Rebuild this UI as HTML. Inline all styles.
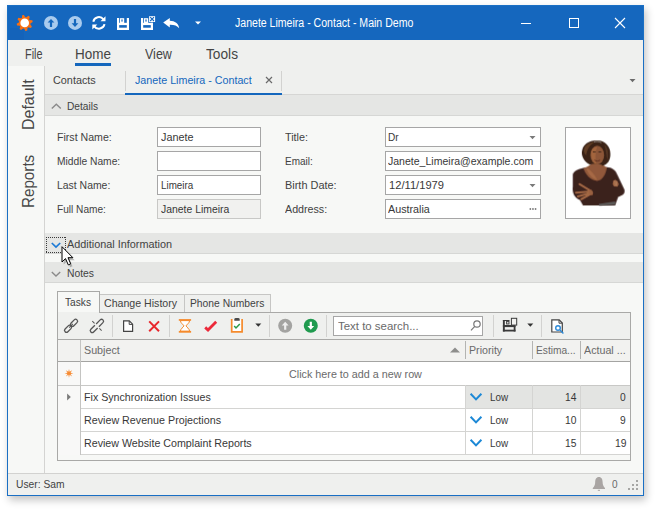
<!DOCTYPE html>
<html><head><meta charset="utf-8">
<style>
*{box-sizing:border-box;margin:0;padding:0}
html,body{width:657px;height:511px;overflow:hidden;background:#fff;font-family:"Liberation Sans",sans-serif;font-size:11px;color:#3b3b3b}
.a{position:absolute}
.x{position:absolute;white-space:nowrap;line-height:1;transform-origin:0 50%}
#win{left:7px;top:5px;width:637px;height:491px;background:#eff0ee;box-shadow:2px 4px 8px 0 rgba(0,0,0,.24)}
#frame{left:7px;top:5px;width:637px;height:491px;border:1px solid #1a6fc4}
#title{left:7px;top:5px;width:637px;height:35px;background:#1567be}
#side{left:8px;top:66px;width:37px;height:407px;background:#f7f8f6;border-right:1px solid #d4d4d2}
.hdr{left:45px;width:598px;height:21px;background:#e5e6e4;border-bottom:1px solid #d6d7d5}
.inp{height:20px;background:#fff;border:1px solid #a6a6a6}
.ro{background:#f1f1ef;border-color:#c8c8c6}
.sep{width:1px;height:22px;top:315px;background:#d2d2d0}
svg{position:absolute;overflow:visible}
</style></head><body>
<div id="win" class="a"></div>
<div id="title" class="a"></div>

<!-- menu underline -->
<div class="a" style="left:75px;top:63px;width:36px;height:3px;background:#1467bd"></div>

<div id="side" class="a"></div>

<!-- doc tabs -->
<div class="a" style="left:125px;top:71px;width:1px;height:20px;background:#d2d2d0"></div>
<div class="a" style="left:281px;top:71px;width:1px;height:20px;background:#d2d2d0"></div>
<div class="a" style="left:45px;top:94px;width:598px;height:1px;background:#d6d6d4"></div>
<div class="a" style="left:125px;top:93px;width:157px;height:2px;background:#1467bd"></div>

<!-- Details -->
<div class="a hdr" style="top:95px"></div>
<div class="a" style="left:45px;top:116px;width:598px;height:117px;background:#f7f8f6"></div>
<div class="a inp" style="left:157px;top:127px;width:104px"></div>
<div class="a inp" style="left:157px;top:151px;width:104px"></div>
<div class="a inp" style="left:157px;top:175px;width:104px"></div>
<div class="a inp ro" style="left:157px;top:199px;width:104px"></div>
<div class="a inp" style="left:385px;top:127px;width:156px"></div>
<div class="a inp" style="left:385px;top:151px;width:156px"></div>
<div class="a inp" style="left:385px;top:175px;width:156px"></div>
<div class="a inp" style="left:385px;top:199px;width:156px"></div>
<div class="a" style="left:565px;top:127px;width:66px;height:92px;background:#fff;border:1px solid #a6a6a6"></div>

<div class="a hdr" style="top:233px"></div>
<div class="a" style="left:45px;top:254px;width:598px;height:8px;background:#f7f8f6"></div>
<div class="a hdr" style="top:262px"></div>
<div class="a" style="left:45px;top:283px;width:598px;height:190px;background:#f7f8f6"></div>

<!-- inner tabs -->
<div class="a" style="left:99px;top:294px;width:86px;height:19px;background:#eff0ee;border:1px solid #c6c6c4;border-bottom:0"></div>
<div class="a" style="left:184px;top:294px;width:87px;height:19px;background:#eff0ee;border:1px solid #c6c6c4;border-bottom:0"></div>
<!-- toolbar -->
<div class="a" style="left:57px;top:312px;width:574px;height:28px;background:#eff0ee;border:1px solid #a9a9a7;border-bottom:0"></div>
<div class="a" style="left:57px;top:291px;width:43px;height:22px;background:#f7f8f6;border:1px solid #a9a9a7;border-bottom:0"></div>
<div class="a" style="left:58px;top:312px;width:41px;height:1px;background:#eff0ee"></div>

<div class="a sep" style="left:112px"></div>
<div class="a sep" style="left:169px"></div>
<div class="a sep" style="left:269px"></div>
<div class="a sep" style="left:326px"></div>
<div class="a sep" style="left:493px"></div>
<div class="a sep" style="left:541px"></div>
<div class="a inp" style="left:333px;top:316px;width:150px"></div>

<!-- grid -->
<div class="a" style="left:57px;top:339px;width:574px;height:122px;background:#f7f8f6;border:1px solid #a9a9a7"></div>
<div class="a" style="left:58px;top:340px;width:572px;height:22px;background:#f2f2f0"></div>
<div class="a" style="left:58px;top:362px;width:23px;height:93px;background:#f8f8f7"></div>
<div class="a" style="left:81px;top:361px;width:549px;height:93px;background:#fff"></div>
<div class="a" style="left:466px;top:386px;width:164px;height:22px;background:#e3e4e2"></div>
<!-- grid lines -->
<div class="a" style="left:58px;top:361px;width:572px;height:1px;background:#a4a4a2"></div>
<div class="a" style="left:58px;top:385px;width:572px;height:1px;background:#c8c8c6"></div>
<div class="a" style="left:81px;top:408px;width:549px;height:1px;background:#d4d4d2"></div>
<div class="a" style="left:81px;top:431px;width:549px;height:1px;background:#d4d4d2"></div>
<div class="a" style="left:81px;top:454px;width:549px;height:1px;background:#d4d4d2"></div>
<div class="a" style="left:80px;top:340px;width:1px;height:115px;background:#c4c4c2"></div>
<div class="a" style="left:465px;top:341px;width:1px;height:18px;background:#b4b4b2"></div>
<div class="a" style="left:532px;top:341px;width:1px;height:18px;background:#b4b4b2"></div>
<div class="a" style="left:580px;top:341px;width:1px;height:18px;background:#b4b4b2"></div>
<div class="a" style="left:465px;top:385px;width:1px;height:70px;background:#d4d4d2"></div>
<div class="a" style="left:532px;top:385px;width:1px;height:70px;background:#d4d4d2"></div>
<div class="a" style="left:580px;top:385px;width:1px;height:70px;background:#d4d4d2"></div>

<!-- status -->
<div class="a" style="left:8px;top:473px;width:635px;height:22px;background:#eff0ee;border-top:1px solid #d2d2d0"></div>

<svg class="a" style="left:0;top:0" width="657" height="511" viewBox="0 0 657 511">
<!-- hover patch -->
<rect x="10" y="28" width="14" height="12" fill="#1560b6" opacity=".45"/>
<!-- sun logo -->
<g transform="translate(24.7,22.9)">
  <g fill="#fb6f10"><circle r="5.8"/><path d="M-1.8,-5.2 L-0.9,-8 L0.9,-8 L1.8,-5.2 Z" transform="rotate(-12)"/><path d="M-1.8,-5.2 L-0.9,-8 L0.9,-8 L1.8,-5.2 Z" transform="rotate(33)"/><path d="M-1.8,-5.2 L-0.9,-8 L0.9,-8 L1.8,-5.2 Z" transform="rotate(78)"/><path d="M-1.8,-5.2 L-0.9,-8 L0.9,-8 L1.8,-5.2 Z" transform="rotate(123)"/><path d="M-1.8,-5.2 L-0.9,-8 L0.9,-8 L1.8,-5.2 Z" transform="rotate(168)"/><path d="M-1.8,-5.2 L-0.9,-8 L0.9,-8 L1.8,-5.2 Z" transform="rotate(213)"/><path d="M-1.8,-5.2 L-0.9,-8 L0.9,-8 L1.8,-5.2 Z" transform="rotate(258)"/><path d="M-1.8,-5.2 L-0.9,-8 L0.9,-8 L1.8,-5.2 Z" transform="rotate(303)"/></g>
  <circle r="4.3" fill="#fff"/>
</g>
<!-- up / down circles -->
<g transform="translate(51,22.9)"><circle r="7" fill="#a9cbee"/><path d="M0,-4 L3.4,-0.3 L1.1,-0.3 L1.1,4 L-1.1,4 L-1.1,-0.3 L-3.4,-0.3 Z" fill="#1467bd"/></g>
<g transform="translate(75,22.9)"><circle r="7" fill="#a9cbee"/><path d="M0,4 L3.4,0.3 L1.1,0.3 L1.1,-4 L-1.1,-4 L-1.1,0.3 L-3.4,0.3 Z" fill="#1467bd"/></g>
<!-- refresh -->
<g transform="translate(98.9,22.9)" fill="none" stroke="#fff" stroke-width="2">
  <path d="M-5.6,-1.2 A5.7,5.7 0 0 1 4.6,-3.4"/>
  <path d="M5.6,1.2 A5.7,5.7 0 0 1 -4.6,3.4"/>
  <path d="M6.6,-6.6 L6.6,-1.6 L1.6,-1.6 Z" fill="#fff" stroke="none"/>
  <path d="M-6.6,6.6 L-6.6,1.6 L-1.6,1.6 Z" fill="#fff" stroke="none"/>
</g>
<!-- save -->
<g transform="translate(117,18)" fill="#fff">
  <rect x="0" y="0" width="2.2" height="12"/><rect x="9.8" y="0" width="2.2" height="12"/>
  <rect x="0" y="4.8" width="12" height="2.3"/><rect x="0" y="9.7" width="12" height="2.3"/>
  <rect x="3" y="0.2" width="4.2" height="4.8"/><rect x="4.4" y="1.4" width="1.2" height="2.2" fill="#1567be"/>
</g>
<!-- save & close -->
<g transform="translate(141,18)" fill="#fff">
  <rect x="0" y="0" width="2.2" height="12"/><rect x="9.8" y="4.8" width="2.2" height="7.2"/>
  <rect x="0" y="4.8" width="12" height="2.3"/><rect x="0" y="9.7" width="12" height="2.3"/>
  <rect x="3" y="0.2" width="4.2" height="4.8"/><rect x="4.4" y="1.4" width="1.2" height="2.2" fill="#1567be"/>
  <rect x="8.1" y="-1.8" width="6" height="5.8"/>
  <path d="M9.2,-0.8 L13,3 M13,-0.8 L9.2,3" stroke="#1567be" stroke-width="1.1" fill="none"/>
</g>
<!-- undo -->
<path d="M163.2,22.6 L169.8,18 L169.8,20.8 C175,20.8 178.6,23.6 179.2,28.3 C177,25.6 174,24.6 169.8,24.7 L169.8,27.4 Z" fill="#fff"/>
<path d="M195,21.4 H201 L198,24.6 Z" fill="#fff"/>
<!-- window controls -->
<rect x="521" y="23" width="10" height="1" fill="#fff"/>
<rect x="569.5" y="18.5" width="9" height="9" fill="none" stroke="#fff" stroke-width="1"/>
<path d="M615,18 L625,28 M625,18 L615,28" stroke="#fff" stroke-width="1.1" fill="none"/>
<!-- tab close, tab dropdown -->
<path d="M266,77 L272,83 M272,77 L266,83" stroke="#6a6a6a" stroke-width="1.2" fill="none"/>
<path d="M629.5,79 H635.5 L632.5,82.2 Z" fill="#6a6a6a"/>
<!-- group chevrons -->
<path d="M51.8,108.6 L56.3,104.2 L60.8,108.6" stroke="#8a8a8a" stroke-width="1.4" fill="none"/>
<path d="M51.8,243 L56,247 L60.2,243" stroke="#1c7ad6" stroke-width="1.7" fill="none"/>
<path d="M51.8,272 L56,276 L60.2,272" stroke="#8a8a8a" stroke-width="1.4" fill="none"/>
<g shape-rendering="crispEdges" stroke="#3a3a3a" stroke-width="1" stroke-dasharray="1 1" fill="none"><path d="M46,237.5 H66 M46,252.5 H66 M46.5,237 V253 M65.5,237 V253"/></g>
<!-- combo arrows -->
<path d="M529.5,136 H535.5 L532.5,139.2 Z" fill="#7a7a7a"/>
<path d="M529.5,184 H535.5 L532.5,187.2 Z" fill="#7a7a7a"/>
<g fill="#6a6a6a"><rect x="529.6" y="208.2" width="1.5" height="1.6"/><rect x="532.2" y="208.2" width="1.5" height="1.6"/><rect x="534.8" y="208.2" width="1.5" height="1.6"/></g>
</svg>

<svg class="a" style="left:0;top:0" width="657" height="511" viewBox="0 0 657 511">
<!-- link -->
<g transform="translate(71.05,325.8) rotate(-45)" fill="none" stroke="#555" stroke-width="1.3">
  <rect x="-8.4" y="-1.95" width="8.3" height="3.9" rx="1.95"/>
  <rect x="0.1" y="-1.95" width="8.3" height="3.9" rx="1.95"/>
  <path d="M-2.6,0 H2.6" stroke-width="1"/>
</g>
<!-- unlink -->
<g transform="translate(96.9,325.95) rotate(-45)" fill="none" stroke="#555" stroke-width="1.3">
  <path d="M-0.9,-1.95 H-6.6 A1.95,1.95 0 0 0 -6.6,1.95 H-0.9"/>
  <path d="M0.9,-1.95 H6.6 A1.95,1.95 0 0 1 6.6,1.95 H0.9"/>
  <path d="M0.1,-6.6 V-3.4 M0.1,6.6 V3.4" stroke-width="1"/>
</g>
<!-- new doc -->
<path d="M123.6,320.9 H129.3 L132.6,324.2 V331.3 H123.6 Z" fill="#fff" stroke="#444" stroke-width="1.2"/>
<path d="M129.2,321 V324.4 H132.6" fill="none" stroke="#444" stroke-width="1"/>
<!-- red X -->
<path d="M149.2,321.4 L159,331.2 M159,321.4 L149.2,331.2" stroke="#e8272c" stroke-width="2" fill="none"/>
<!-- hourglass -->
<path d="M180.4,320.6 H189.6 C189.6,323 186.6,324.6 186,325.9 C186.6,327.2 189.6,328.8 189.6,331.2 H180.4 C180.4,328.8 183.4,327.2 184,325.9 C183.4,324.6 180.4,323 180.4,320.6 Z" fill="#fff" stroke="#f58a2c" stroke-width="1"/>
<rect x="178.8" y="319.1" width="12.3" height="1.7" fill="#f58a2c"/>
<rect x="178.8" y="330.9" width="12.3" height="1.8" fill="#f58a2c"/>
<!-- red check -->
<path d="M205.2,327.4 L208,330 L216.2,321.8" stroke="#ec2a3a" stroke-width="2.8" fill="none"/>
<!-- clipboard -->
<rect x="231.7" y="319.4" width="10.4" height="12.5" fill="#fff"/>
<path d="M231.7,319.1 V331.9 H242.1 V319.1" fill="none" stroke="#f58a2c" stroke-width="1.7"/>
<path d="M234.3,320.8 V319.4 C234.3,318.2 235,317.9 237,317.9 C239,317.9 239.7,318.2 239.7,319.4 V320.8 Z" fill="#4a4a4a"/>
<path d="M234.2,326 L236,328 L239.8,324" stroke="#2c9b4a" stroke-width="1.5" fill="none"/>
<!-- dropdown -->
<path d="M255.3,323.6 H261.3 L258.3,326.8 Z" fill="#333"/>
<!-- up/down circles -->
<g transform="translate(285.2,325.8)"><circle r="7" fill="#a3a3a1"/><path d="M0,-4 L3.4,-0.3 L1.1,-0.3 L1.1,4 L-1.1,4 L-1.1,-0.3 L-3.4,-0.3 Z" fill="#eee"/></g>
<g transform="translate(310.8,325.8)"><circle r="7" fill="#1f9a4e"/><path d="M0,4 L3.4,0.3 L1.1,0.3 L1.1,-4 L-1.1,-4 L-1.1,0.3 L-3.4,0.3 Z" fill="#fff"/></g>
<!-- magnifier -->
<g fill="none" stroke="#777" stroke-width="1.2"><circle cx="477" cy="324" r="3.2"/><path d="M474.8,326.4 L471,330.4"/></g>
<!-- layout icon -->
<g fill="#3a3a3a">
  <rect x="502.9" y="320" width="1.9" height="11.5"/>
  <rect x="502.9" y="329.7" width="12.6" height="1.8"/>
  <rect x="513.7" y="326" width="1.8" height="5.5"/>
  <rect x="502.9" y="325" width="12.6" height="2.1"/>
  <rect x="502.9" y="320" width="6.6" height="1"/>
  <rect x="506.6" y="321.4" width="2.4" height="2.6" fill="#d8d8d6" stroke="#3a3a3a" stroke-width=".9"/>
  <rect x="511.4" y="318.3" width="5.3" height="6.8" fill="#f2f2f0" stroke="#3a3a3a" stroke-width="1"/>
</g>
<path d="M527.3,323.6 H533.3 L530.3,326.8 Z" fill="#333"/>
<!-- preview -->
<path d="M551.8,319.9 H559.2 L562.3,323 V332 H551.8 Z" fill="#fff" stroke="#444" stroke-width="1.2"/>
<path d="M559,320 V323.2 H562.2" fill="none" stroke="#444" stroke-width="1"/>
<g fill="#fff" stroke="#2d8ad8" stroke-width="1.4"><circle cx="558" cy="328" r="2.3"/><path d="M560,330 L563.4,333.4"/></g>
<!-- grid glyphs -->
<path d="M450,352.6 H460 L455,347.4 Z" fill="#8e8e8c"/>
<polygon transform="translate(69,373.3)" points="0.00,-4.40 0.65,-1.57 3.11,-3.11 1.57,-0.65 4.40,-0.00 1.57,0.65 3.11,3.11 0.65,1.57 0.00,4.40 -0.65,1.57 -3.11,3.11 -1.57,0.65 -4.40,0.00 -1.57,-0.65 -3.11,-3.11 -0.65,-1.57" fill="#f68b33"/>
<path d="M67.1,393.6 L70.8,397.1 L67.1,400.6 Z" fill="#7a7a7a"/>
<g fill="none" stroke="#1c88d6" stroke-width="2">
  <path d="M470.6,393.8 L476,399.4 L481.4,393.8"/>
  <path d="M470.6,416.8 L476,422.4 L481.4,416.8"/>
  <path d="M470.6,439.8 L476,445.4 L481.4,439.8"/>
</g>
<!-- bell -->
<path d="M598.9,476.9 C601.6,476.9 602.6,479.4 602.6,482 C602.6,485 603.6,486.6 605,488 V489 H592.8 V488 C594.2,486.6 595.2,485 595.2,482 C595.2,479.4 596.2,476.9 598.9,476.9 Z" fill="#a9a5a3"/>
<rect x="597.8" y="489.8" width="2.2" height="1" fill="#a9a5a3"/>
<!-- grip -->
<g fill="#a6a6a4"><rect x="636" y="480" width="2" height="2"/><rect x="632" y="484" width="2" height="2"/><rect x="636" y="484" width="2" height="2"/><rect x="628" y="488" width="2" height="2"/><rect x="632" y="488" width="2" height="2"/><rect x="636" y="488" width="2" height="2"/></g>
<!-- cursor -->
<g transform="translate(61.5,246)">
  <path d="M1.2,1.6 V17 L4.8,13.6 L7.6,19.8 L10,18.8 L7.3,12.8 H12.2 Z" fill="#000" opacity=".25" transform="translate(1,1.4)"/>
  <path d="M0.5,0.7 V16 L4,12.6 L6.8,18.9 L9.2,17.8 L6.5,11.7 H11.4 Z" fill="#fff" stroke="#000" stroke-width="1" stroke-linejoin="miter"/>
</g>
</svg>

<svg class="a" style="left:565px;top:135px" width="66" height="80" viewBox="0 0 422 511">
<defs><filter id="pb" x="-5%" y="-5%" width="110%" height="110%"><feGaussianBlur stdDeviation="3.2"/></filter></defs>
<g filter="url(#pb)">
  <!-- sweater body -->
  <path d="M50,250 C60,225 90,215 125,208 L205,230 L265,205 C300,205 325,225 335,255 L380,350 C385,375 370,385 340,395 L320,450 L115,450 L95,415 C60,400 45,370 50,330 Z" fill="#3b211d"/>
  <!-- chest / neck skin -->
  <path d="M118,212 C150,200 160,195 168,175 L240,175 C245,195 255,202 268,206 C262,250 240,292 205,294 C165,290 130,255 118,212 Z" fill="#91593a"/>
  <path d="M150,215 C170,235 190,250 205,288 C175,280 150,250 135,215 Z" fill="#b0714a" opacity=".7"/>
  <!-- hair -->
  <path d="M200,34 C250,30 292,70 290,120 C292,160 270,190 240,196 C225,180 180,180 160,190 C120,170 100,130 110,95 C118,60 150,36 200,34 Z" fill="#3a2317"/>
  <path d="M250,60 C275,80 282,120 270,160 C262,130 262,90 250,60 Z" fill="#5a3a25" opacity=".8"/>
  <path d="M125,80 C140,55 170,45 190,45 C160,60 140,90 135,130 C120,115 118,95 125,80 Z" fill="#6b4429" opacity=".8"/>
  <!-- face -->
  <ellipse cx="206" cy="128" rx="44" ry="60" fill="#8d5738"/>
  <path d="M168,110 C170,85 190,75 205,74 C195,100 190,150 200,186 C180,175 166,150 168,110 Z" fill="#a9693f" opacity=".8"/>
  <path d="M178,108 H196 M214,108 H232" stroke="#2a1810" stroke-width="5"/>
  <path d="M188,160 C198,168 214,168 224,160" stroke="#5a2a20" stroke-width="6" fill="none"/>
  <path d="M185,45 C200,38 220,40 232,50" stroke="#9a9088" stroke-width="6" fill="none"/>
  <!-- hands -->
  <path d="M150,345 C175,348 185,365 176,385 L130,388 Z" fill="#9a6140"/>
  <g stroke="#a36845" stroke-width="13" stroke-linecap="round" fill="none">
    <path d="M92,314 L150,348"/><path d="M70,368 L150,362"/><path d="M82,392 L150,374"/><path d="M104,410 L155,382"/>
  </g>
  <path d="M308,292 L322,286 L336,296 L344,314 L336,330 L312,328 L304,312 Z" fill="#9a6140"/>
  <path d="M318,290 L320,325 M330,294 L330,326" stroke="#c08a66" stroke-width="5"/>
<!-- belt -->
  <path d="M215,440 L320,425 L322,445 L220,452 Z" fill="#5c5a58"/>
</g>
</svg>


<span class="x" style="left:235.0px;top:17px;font-size:12px;color:#ffffff;transform:scaleX(0.8794);">Janete Limeira - Contact - Main Demo</span>
<span class="x" style="left:24.5px;top:46px;font-size:15px;color:#444;transform:scaleX(0.7240);">File</span>
<span class="x" style="left:75.2px;top:46px;font-size:15px;color:#444;transform:scaleX(0.8996);">Home</span>
<span class="x" style="left:144.8px;top:46px;font-size:15px;color:#444;transform:scaleX(0.8341);">View</span>
<span class="x" style="left:206.2px;top:46px;font-size:15px;color:#444;transform:scaleX(0.9135);">Tools</span>
<span class="x" style="left:53.4px;top:75px;font-size:11px;color:#424242;transform:scaleX(0.9857);">Contacts</span>
<span class="x" style="left:135.0px;top:75px;font-size:11px;color:#1467bd;transform:scaleX(0.9738);">Janete Limeira - Contact</span>
<span class="x" style="left:67.0px;top:101px;font-size:11px;color:#424242;transform:scaleX(0.9219);">Details</span>
<span class="x" style="left:56.7px;top:132px;font-size:11px;color:#424242;transform:scaleX(0.9640);">First Name:</span>
<span class="x" style="left:56.7px;top:156px;font-size:11px;color:#424242;transform:scaleX(0.9313);">Middle Name:</span>
<span class="x" style="left:56.7px;top:180px;font-size:11px;color:#424242;transform:scaleX(0.9476);">Last Name:</span>
<span class="x" style="left:56.7px;top:204px;font-size:11px;color:#424242;transform:scaleX(0.9194);">Full Name:</span>
<span class="x" style="left:160.8px;top:132px;font-size:11px;color:#383838;transform:scaleX(0.9839);">Janete</span>
<span class="x" style="left:160.8px;top:180px;font-size:11px;color:#383838;transform:scaleX(0.8925);">Limeira</span>
<span class="x" style="left:160.8px;top:204px;font-size:11px;color:#383838;transform:scaleX(0.9466);">Janete Limeira</span>
<span class="x" style="left:284.8px;top:132px;font-size:11px;color:#424242;transform:scaleX(0.9813);">Title:</span>
<span class="x" style="left:284.8px;top:156px;font-size:11px;color:#424242;transform:scaleX(0.9063);">Email:</span>
<span class="x" style="left:284.8px;top:180px;font-size:11px;color:#424242;transform:scaleX(0.9929);">Birth Date:</span>
<span class="x" style="left:284.8px;top:204px;font-size:11px;color:#424242;transform:scaleX(0.9719);">Address:</span>
<span class="x" style="left:388.4px;top:132px;font-size:11px;color:#383838;transform:scaleX(0.9131);">Dr</span>
<span class="x" style="left:388.4px;top:156px;font-size:11px;color:#383838;transform:scaleX(0.9572);">Janete_Limeira@example.com</span>
<span class="x" style="left:389.2px;top:180px;font-size:11px;color:#383838;transform:scaleX(1.0138);">12/11/1979</span>
<span class="x" style="left:388.4px;top:204px;font-size:11px;color:#383838;transform:scaleX(0.9767);">Australia</span>
<span class="x" style="left:67.0px;top:239px;font-size:11px;color:#424242;transform:scaleX(0.9868);">Additional Information</span>
<span class="x" style="left:67.0px;top:268px;font-size:11px;color:#424242;transform:scaleX(0.9391);">Notes</span>
<span class="x" style="left:65.3px;top:297px;font-size:11px;color:#424242;transform:scaleX(0.9244);">Tasks</span>
<span class="x" style="left:104.0px;top:298px;font-size:11px;color:#424242;transform:scaleX(0.9640);">Change History</span>
<span class="x" style="left:190.0px;top:298px;font-size:11px;color:#424242;transform:scaleX(0.9358);">Phone Numbers</span>
<span class="x" style="left:338.2px;top:321px;font-size:11px;color:#6a6a6a;transform:scaleX(1.0392);">Text to search...</span>
<span class="x" style="left:83.6px;top:345px;font-size:11px;color:#6a6a6a;transform:scaleX(0.9754);">Subject</span>
<span class="x" style="left:468.8px;top:345px;font-size:11px;color:#6a6a6a;transform:scaleX(0.9698);">Priority</span>
<span class="x" style="left:535.9px;top:345px;font-size:11px;color:#6a6a6a;transform:scaleX(0.9253);">Estima...</span>
<span class="x" style="left:583.8px;top:345px;font-size:11px;color:#6a6a6a;transform:scaleX(0.9720);">Actual ...</span>
<span class="x" style="left:288.6px;top:369px;font-size:11px;color:#6a6a6a;transform:scaleX(0.9791);">Click here to add a new row</span>
<span class="x" style="left:84.3px;top:392px;font-size:11px;color:#383838;transform:scaleX(0.9691);">Fix Synchronization Issues</span>
<span class="x" style="left:84.3px;top:415px;font-size:11px;color:#383838;transform:scaleX(0.9741);">Review Revenue Projections</span>
<span class="x" style="left:84.3px;top:438px;font-size:11px;color:#383838;transform:scaleX(0.9704);">Review Website Complaint Reports</span>
<span class="x" style="left:489.7px;top:392px;font-size:11px;color:#383838;transform:scaleX(0.8966);">Low</span>
<span class="x" style="left:565.4px;top:392px;font-size:11px;color:#383838;transform:scaleX(0.9306);">14</span>
<span class="x" style="left:620.3px;top:392px;font-size:11px;color:#383838;transform:scaleX(0.9306);">0</span>
<span class="x" style="left:489.7px;top:415px;font-size:11px;color:#383838;transform:scaleX(0.8966);">Low</span>
<span class="x" style="left:565.4px;top:415px;font-size:11px;color:#383838;transform:scaleX(0.9306);">10</span>
<span class="x" style="left:620.3px;top:415px;font-size:11px;color:#383838;transform:scaleX(0.9306);">9</span>
<span class="x" style="left:489.7px;top:438px;font-size:11px;color:#383838;transform:scaleX(0.8966);">Low</span>
<span class="x" style="left:565.4px;top:438px;font-size:11px;color:#383838;transform:scaleX(0.9306);">15</span>
<span class="x" style="left:614.5px;top:438px;font-size:11px;color:#383838;transform:scaleX(0.9388);">19</span>
<span class="x" style="left:15.5px;top:479px;font-size:11px;color:#424242;transform:scaleX(0.9333);">User: Sam</span>
<span class="x" style="left:611.7px;top:479px;font-size:11px;color:#6a6a6a;transform:scaleX(0.9143);">0</span>
<span class="x" style="left:19.7px;top:129.6px;font-size:17px;color:#484848;transform-origin:0 0;transform:rotate(-90deg) scaleX(0.9392);">Default</span>
<span class="x" style="left:19.7px;top:208.4px;font-size:17px;color:#484848;transform-origin:0 0;transform:rotate(-90deg) scaleX(0.8936);">Reports</span>

<div id="frame" class="a"></div>
</body></html>
